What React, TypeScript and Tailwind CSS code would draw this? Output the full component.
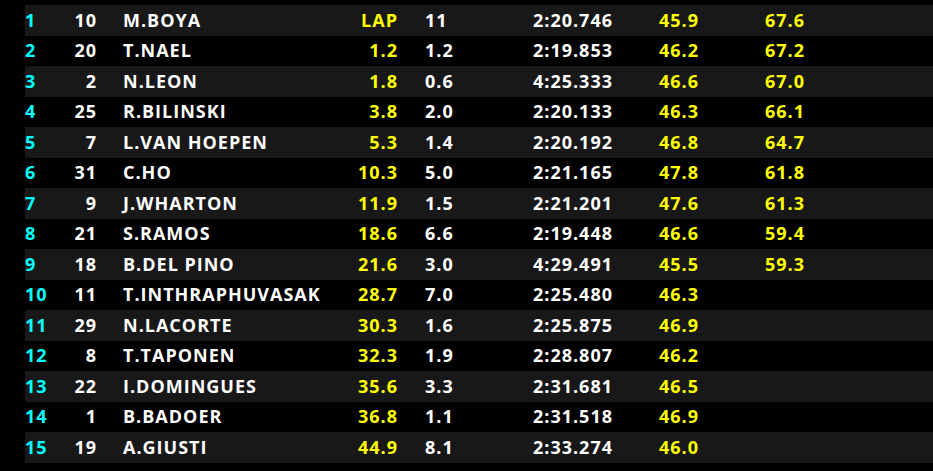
type Row = {
  pos: number;
  num: number;
  name: string;
  gap: string;
  int: string;
  lap: string;
  s1: string;
  s2?: string;
};

const rows: Row[] = [
  { pos: 1, num: 10, name: "M.BOYA", gap: "LAP", int: "11", lap: "2:20.746", s1: "45.9", s2: "67.6" },
  { pos: 2, num: 20, name: "T.NAEL", gap: "1.2", int: "1.2", lap: "2:19.853", s1: "46.2", s2: "67.2" },
  { pos: 3, num: 2, name: "N.LEON", gap: "1.8", int: "0.6", lap: "4:25.333", s1: "46.6", s2: "67.0" },
  { pos: 4, num: 25, name: "R.BILINSKI", gap: "3.8", int: "2.0", lap: "2:20.133", s1: "46.3", s2: "66.1" },
  { pos: 5, num: 7, name: "L.VAN HOEPEN", gap: "5.3", int: "1.4", lap: "2:20.192", s1: "46.8", s2: "64.7" },
  { pos: 6, num: 31, name: "C.HO", gap: "10.3", int: "5.0", lap: "2:21.165", s1: "47.8", s2: "61.8" },
  { pos: 7, num: 9, name: "J.WHARTON", gap: "11.9", int: "1.5", lap: "2:21.201", s1: "47.6", s2: "61.3" },
  { pos: 8, num: 21, name: "S.RAMOS", gap: "18.6", int: "6.6", lap: "2:19.448", s1: "46.6", s2: "59.4" },
  { pos: 9, num: 18, name: "B.DEL PINO", gap: "21.6", int: "3.0", lap: "4:29.491", s1: "45.5", s2: "59.3" },
  { pos: 10, num: 11, name: "T.INTHRAPHUVASAK", gap: "28.7", int: "7.0", lap: "2:25.480", s1: "46.3" },
  { pos: 11, num: 29, name: "N.LACORTE", gap: "30.3", int: "1.6", lap: "2:25.875", s1: "46.9" },
  { pos: 12, num: 8, name: "T.TAPONEN", gap: "32.3", int: "1.9", lap: "2:28.807", s1: "46.2" },
  { pos: 13, num: 22, name: "I.DOMINGUES", gap: "35.6", int: "3.3", lap: "2:31.681", s1: "46.5" },
  { pos: 14, num: 1, name: "B.BADOER", gap: "36.8", int: "1.1", lap: "2:31.518", s1: "46.9" },
  { pos: 15, num: 19, name: "A.GIUSTI", gap: "44.9", int: "8.1", lap: "2:33.274", s1: "46.0" },
];

export default function App() {
  return (
    <div
      className="h-[471px] w-[933px] overflow-hidden bg-black pl-[25px] pt-[5px] text-[18px] font-bold tracking-[1px] text-white"
      style={{ fontFamily: '"Open Sans", sans-serif' }}
    >
      {rows.map((r, i) => (
        <div
          key={r.pos}
          className={`flex h-[30.5px] items-center whitespace-nowrap ${i % 2 === 0 ? "bg-[#181818]" : "bg-black"}`}
        >
          <div className="w-[40px] text-[#00ffff]">{r.pos}</div>
          <div className="w-[32px] text-right">{r.num}</div>
          <div className="w-[225px] pl-[26px]">{r.name}</div>
          <div className="w-[76px] text-right text-[#ffff00]">{r.gap}</div>
          <div className="w-[122px] pl-[27px]">{r.int}</div>
          <div className="w-[93px] text-right">{r.lap}</div>
          <div className="w-[152px] pl-[46px] text-[#ffff00]">{r.s1}</div>
          <div className="text-[#ffff00]">{r.s2}</div>
        </div>
      ))}
    </div>
  );
}
